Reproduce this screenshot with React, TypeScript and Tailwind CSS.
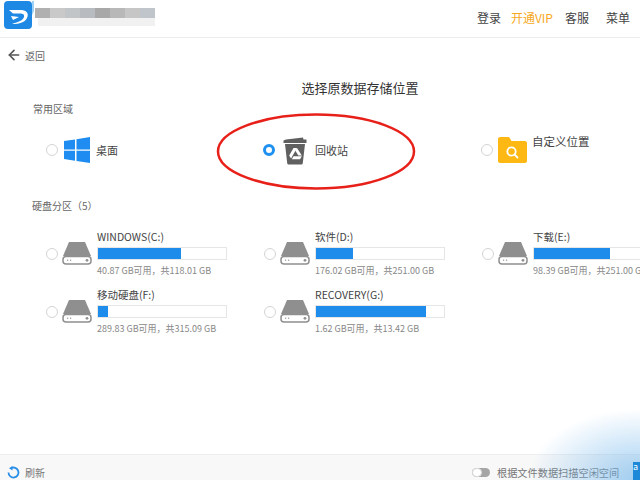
import { ArrowLeft } from "lucide-react"

const FONT = "font-['Noto_Sans_CJK_SC','Noto_Sans',sans-serif]"

const drives = [
  { name: "WINDOWS(C:)", pct: 65, info: "40.87 GB可用，共118.01 GB" },
  { name: "软件(D:)", pct: 29, info: "176.02 GB可用，共251.00 GB" },
  { name: "下载(E:)", pct: 59, info: "98.39 GB可用，共251.00 GB" },
  { name: "移动硬盘(F:)", pct: 8, info: "289.83 GB可用，共315.09 GB" },
  { name: "RECOVERY(G:)", pct: 86, info: "1.62 GB可用，共13.42 GB" },
]

const blurTop = ["#b0b0b0", "#c9c9c9", "#c2c5c8", "#b8bcc0", "#a8a8a8", "#b8b8b8", "#c6c6c6", "#bfc5cb"]

function Radio({ checked = false }: { checked?: boolean }) {
  if (checked) {
    return <span className="block h-[12px] w-[12px] shrink-0 rounded-full border-[3.5px] border-[#1e90f0] bg-white" />
  }
  return <span className="block h-[12px] w-[12px] shrink-0 rounded-full border border-[#d4d4d4] bg-white" />
}

function Logo() {
  return (
    <svg width="30" height="30" viewBox="0 0 30 30" className="block shrink-0">
      <rect x="0" y="0" width="28" height="28" rx="4" fill="#1e88e5" />
      <path d="M28 0h2v10l-2 4z" fill="#9fd0f5" />
      <path
        d="M5 9h12c6 0 8 4 6 8-2 4-7 6-15 6 5-2 11-3 12-7 .6-2.500-1-3.500-4-3.500H9z"
        fill="#fff"
      />
      <path d="M7 15l8 1-6 3z" fill="#fff" />
    </svg>
  )
}

function WindowsIcon() {
  return (
    <svg width="26" height="26" viewBox="0 0 26 26" className="block shrink-0">
      <path d="M0 4l11-1.600V12.500H0z" fill="#1e8cf0" />
      <path d="M12.500 2.200L26 0v12.500H12.500z" fill="#1e8cf0" />
      <path d="M0 13.700h11v10L0 22z" fill="#1e8cf0" />
      <path d="M12.500 13.700H26V26l-13.500-2.100z" fill="#1e8cf0" />
    </svg>
  )
}

function BinIcon() {
  return (
    <svg width="24" height="30" viewBox="0 0 24 30" className="block shrink-0">
      <path d="M3 4.500L20 2.500l.5 2H23.500v3.500H0.500V5.500z" fill="#5f5f5f" />
      <path d="M2 9h20l-2.200 19c-.1 1-.8 1.500-1.800 1.500H6c-1 0-1.700-.5-1.800-1.500z" fill="#606060" />
      <path d="M10.500 13h3.500l-4 7-2 3.500-1.800-3z" fill="#fff" />
      <path d="M14 13l4.800 7.500h-3.500L12.200 15.500z" fill="#fff" />
      <path d="M10.500 21.200h8.300l-1.800 3H8.800z" fill="#fff" />
    </svg>
  )
}

function FolderIcon() {
  return (
    <svg width="29" height="26" viewBox="0 0 29 26" className="block shrink-0">
      <path
        d="M0 2c0-1 .8-2 2-2h8c1 0 1.500.5 2 1.500L13.500 4H27c1 0 2 1 2 2v18c0 1-1 2-2 2H2c-1 0-2-1-2-2z"
        fill="#fdb813"
      />
      <circle cx="13.500" cy="14.500" r="4.200" fill="none" stroke="#fff" strokeWidth="1.800" />
      <path d="M16.500 17.500l3 3" stroke="#fff" strokeWidth="1.800" strokeLinecap="round" />
    </svg>
  )
}

function DiskIcon() {
  return (
    <svg width="30" height="23" viewBox="0 0 30 23" className="block shrink-0">
      <path d="M7 0h16l6 14H1z" fill="#8f8f8f" />
      <rect x="1" y="14.500" width="28" height="7.500" rx="3" fill="#fff" stroke="#8f8f8f" strokeWidth="1.500" />
      <circle cx="25" cy="18.300" r="1.400" fill="#8f8f8f" />
      <rect x="5" y="17.500" width="1.200" height="1.500" fill="#aaa" />
      <rect x="8" y="17.500" width="1.200" height="1.500" fill="#aaa" />
    </svg>
  )
}

function RefreshIcon() {
  return (
    <svg width="13" height="13" viewBox="0 0 13 13" fill="none" className="block shrink-0">
      <path d="M4 2.200A5 5 0 1 1 1.500 6.500" stroke="#2b8fe8" strokeWidth="1.800" />
      <path d="M5.500 0v4.500L2 2.200z" fill="#2b8fe8" />
    </svg>
  )
}

export default function App() {
  return (
    <div className={`relative flex h-[480px] w-[640px] flex-col overflow-hidden bg-white text-[#444] ${FONT}`}>
      {/* Header */}
      <header className="flex h-[38px] shrink-0 items-start border-b border-[#ececec] pl-1">
        <div className="mt-[1px]">
          <Logo />
        </div>
        <div className="ml-[1px] mt-[8px] flex flex-col blur-[0.7px]">
          <div className="flex h-[10px]">
            {blurTop.map((c, i) => (
              <div key={i} className="h-full w-[15px]" style={{ backgroundColor: c }} />
            ))}
          </div>
          <div className="ml-[3px] h-[8px] w-[117px] bg-[#f1f1f1]" />
        </div>
        <nav className="ml-auto mr-[10px] mt-[9px] flex text-[12px] leading-[17px]">
          <span>登录</span>
          <span className="ml-[10px] text-[#f7a823]">开通VIP</span>
          <span className="ml-[12px]">客服</span>
          <span className="ml-[17px]">菜单</span>
        </nav>
      </header>

      {/* Back */}
      <div className="mt-[9px] flex h-[16px] items-center pl-[6px] text-[10px] text-[#666]">
        <ArrowLeft size={16} strokeWidth={2.400} className="text-[#555]" />
        <span className="ml-[3px]">返回</span>
      </div>

      <h1 className="mt-[15px] h-[20px] pl-[80px] text-center text-[13px] font-normal leading-[20px] text-[#333]">
        选择原数据存储位置
      </h1>

      {/* Common places */}
      <p className="mt-[4px] pl-[33px] text-[10px] leading-[14px] text-[#666]">常用区域</p>
      <div className="mt-[19px] flex h-[30px] items-center pl-[46px] text-[11px]">
        <Radio />
        <div className="ml-[6px]">
          <WindowsIcon />
        </div>
        <span className="ml-[6px]">桌面</span>
        <div className="ml-[145px]">
          <Radio checked />
        </div>
        <div className="ml-[8px]">
          <BinIcon />
        </div>
        <span className="ml-[8px]">回收站</span>
        <div className="ml-[133px]">
          <Radio />
        </div>
        <div className="ml-[5px]">
          <FolderIcon />
        </div>
        <span className="mb-[16px] ml-[5px] text-[11.500px]">自定义位置</span>
      </div>

      {/* Drives */}
      <p className="mt-[34px] pl-[32px] text-[10px] leading-[14px] text-[#666]">硬盘分区（5）</p>
      <div className="mt-[16px] grid grid-cols-[218px_218px_218px] gap-y-[9px] pl-[46px]">
        {drives.map((d) => (
          <div key={d.name} className="flex h-[49px] items-center">
            <Radio />
            <div className="ml-[4px]">
              <DiskIcon />
            </div>
            <div className="ml-[5px] w-[130px] shrink-0">
              <p className="whitespace-nowrap text-[10.500px] leading-[14px] text-[#444]">{d.name}</p>
              <div className="mt-[3px] h-[13px] w-[130px] border border-[#e6e6e6] bg-white">
                <div className="h-full bg-[#1e8ceb]" style={{ width: `${d.pct}%` }} />
              </div>
              <p className="mt-[4px] whitespace-nowrap text-[9px] leading-[13px] text-[#888]">{d.info}</p>
            </div>
          </div>
        ))}
      </div>

      {/* Footer */}
      <footer className="mt-auto flex h-[26px] shrink-0 items-center border-t border-[#eeeeee] bg-[#f8f8f8] pl-[7px] pt-[10px] text-[10px] text-[#777]">
        <RefreshIcon />
        <span className="ml-[5px]">刷新</span>
        <span className="relative ml-[427px] block h-[9px] w-[18px] rounded-full bg-[#a5a5a5]">
          <span className="absolute left-0 top-0 block h-[9px] w-[10px] rounded-full border border-[#ddd] bg-white" />
        </span>
        <span className="ml-[7px] whitespace-nowrap text-[10.200px]">根据文件数据扫描空闲空间</span>
      </footer>

      {/* Annotation drawn over the screenshot */}
      <svg width="640" height="480" className="pointer-events-none absolute left-0 top-0">
        <ellipse cx="316" cy="151.500" rx="98" ry="37" fill="none" stroke="#e8201a" strokeWidth="2.500" />
      </svg>

      {/* Watermark corner */}
      <div className="pointer-events-none absolute bottom-0 right-0 h-[70px] w-[110px] bg-[radial-gradient(ellipse_at_bottom_right,rgba(110,180,235,0.65),rgba(255,255,255,0)_72%)]" />
      <div className="absolute bottom-0 right-0 h-[18px] w-[7px] overflow-hidden bg-[#1e88d8] text-[9px] leading-[9px] text-white">
        a
      </div>
    </div>
  )
}
